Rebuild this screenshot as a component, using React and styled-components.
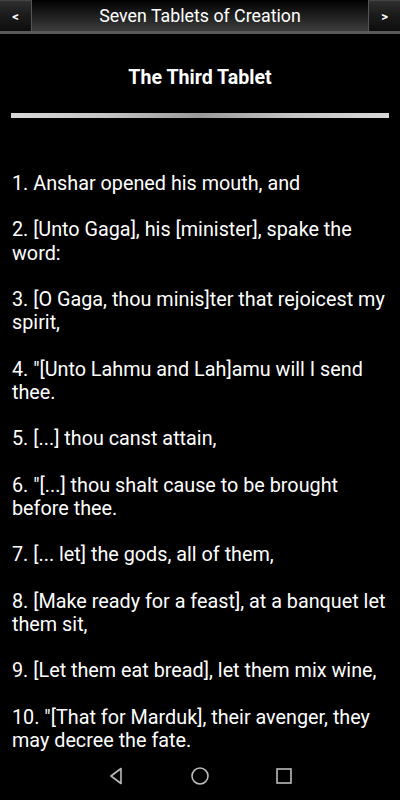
import React from 'react';
import styled, { createGlobalStyle } from 'styled-components';

const GlobalStyle = createGlobalStyle`
  html, body {
    margin: 0;
    padding: 0;
    background: #000;
  }
  body {
    font-family: Roboto, "Noto Sans", "Liberation Sans", sans-serif;
  }
`;

const Screen = styled.div`
  width: 400px;
  height: 800px;
  display: flex;
  flex-direction: column;
  background: #000;
  color: #fff;
  overflow: hidden;
`;

const TitleBar = styled.div`
  height: 31px;
  display: flex;
  align-items: stretch;
  background: linear-gradient(to bottom, #000 0%, #1c1c1c 45%, #3c3c3c 100%);
  border-bottom: 3px solid #5a5a5a;
  flex-shrink: 0;
`;

const NavButton = styled.div`
  width: 32px;
  display: flex;
  align-items: center;
  justify-content: center;
  background: linear-gradient(to bottom, #2e2e2e 0%, #1a1a1a 50%, #0e0e0e 100%);
  border-top: 1px solid #444;
  border-${(p) => (p.side === 'left' ? 'right' : 'left')}: 1px solid #555;
  color: #fff;
  font-size: 13px;
  font-weight: 700;
  box-sizing: border-box;
`;

const Title = styled.div`
  flex: 1;
  text-align: center;
  font-size: 17.8px;
  line-height: 31px;
  color: #fff;
`;

const Body = styled.div`
  flex: 1;
  overflow: hidden;
  padding: 0 11px;
`;

const Heading = styled.h1`
  margin: 31px 0 0;
  text-align: center;
  font-size: 19.6px;
  font-weight: 700;
  line-height: 26px;
`;

const Rule = styled.div`
  margin-top: 22px;
  height: 5px;
  background: linear-gradient(to right, #d8d8d8 0%, #c4c4c4 25%, #9a9a9a 50%, #c4c4c4 75%, #d8d8d8 100%);
`;

const Verses = styled.div`
  padding: 54px 1px 0;
  font-size: 19.8px;
  line-height: 23.2px;
`;

const Verse = styled.p`
  margin: 0 0 23.2px;
  &:last-child {
    margin-bottom: 0;
  }
`;

const SystemNav = styled.div`
  height: 44px;
  padding-bottom: 2px;
  flex-shrink: 0;
  display: flex;
  align-items: center;
  justify-content: center;
  gap: 60px;
  background: #000;
`;

const NavIcon = styled.svg`
  width: 24px;
  height: 24px;
  display: block;
`;

const verses = [
  '1. Anshar opened his mouth, and',
  '2. [Unto Gaga], his [minister], spake the word:',
  '3. [O Gaga, thou minis]ter that rejoicest my spirit,',
  '4. "[Unto Lahmu and Lah]amu will I send thee.',
  '5. [...] thou canst attain,',
  '6. "[...] thou shalt cause to be brought before thee.',
  '7. [... let] the gods, all of them,',
  '8. [Make ready for a feast], at a banquet let them sit,',
  '9. [Let them eat bread], let them mix wine,',
  '10. "[That for Marduk], their avenger, they may decree the fate.',
];

export default function App() {
  return (
    <Screen>
      <GlobalStyle />
      <TitleBar>
        <NavButton side="left">&lt;</NavButton>
        <Title>Seven Tablets of Creation</Title>
        <NavButton side="right">&gt;</NavButton>
      </TitleBar>
      <Body>
        <Heading>The Third Tablet</Heading>
        <Rule />
        <Verses>
          {verses.map((v) => (
            <Verse key={v}>{v}</Verse>
          ))}
        </Verses>
      </Body>
      <SystemNav>
        <NavIcon viewBox="0 0 24 24">
          <path d="M17 4.5 L7 12 L17 19.5 Z" fill="none" stroke="#bbb" strokeWidth="1.6" strokeLinejoin="round" />
        </NavIcon>
        <NavIcon viewBox="0 0 24 24">
          <circle cx="12" cy="12" r="8" fill="none" stroke="#bbb" strokeWidth="1.6" />
        </NavIcon>
        <NavIcon viewBox="0 0 24 24">
          <rect x="5" y="5" width="14" height="14" fill="none" stroke="#bbb" strokeWidth="1.6" />
        </NavIcon>
      </SystemNav>
    </Screen>
  );
}
